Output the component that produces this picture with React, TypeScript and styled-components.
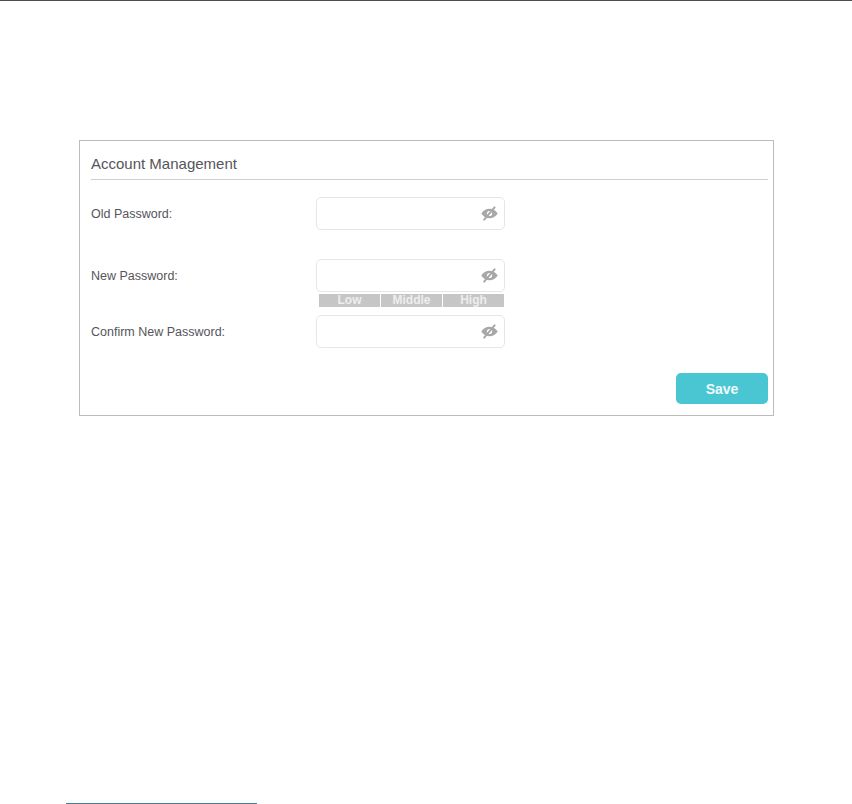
import styled, { createGlobalStyle } from 'styled-components'

const GlobalStyle = createGlobalStyle`
  html, body {
    margin: 0;
    padding: 0;
    background: #fff;
    font-family: "Liberation Sans", Arial, sans-serif;
  }
`

const EyeOffIcon = () => (
  <svg width="17" height="15" viewBox="0 0 17 15" aria-hidden="true">
    <path
      d="M0.3 7.5C2.2 4.5 5.1 2.8 8.5 2.8s6.3 1.7 8.2 4.7c-1.9 3-4.8 4.7-8.2 4.7s-6.3-1.7-8.2-4.7z"
      fill="#a8a8a8"
    />
    <circle cx="8.5" cy="7.5" r="2.6" fill="#fff" />
    <path d="M3.2 13.6L13.6 1.4" stroke="#a8a8a8" strokeWidth="2" strokeLinecap="round" />
  </svg>
)

const PasswordField = () => (
  <FieldBox>
    <EyeOffIcon />
  </FieldBox>
)

const App = () => {
  return (
    <Page>
      <GlobalStyle />
      <Card>
        <Title>Account Management</Title>
        <Row $top={17}>
          <Label>Old Password:</Label>
          <PasswordField />
        </Row>
        <Row $top={29}>
          <Label>New Password:</Label>
          <PasswordField />
        </Row>
        <Strength>
          <StrengthCell>Low</StrengthCell>
          <StrengthCell>Middle</StrengthCell>
          <StrengthCell>High</StrengthCell>
        </Strength>
        <Row $top={8}>
          <Label>Confirm New Password:</Label>
          <PasswordField />
        </Row>
        <Actions>
          <SaveButton>Save</SaveButton>
        </Actions>
      </Card>
      <FootnoteRule />
    </Page>
  )
}

const Page = styled.div`
  height: 804px;
  box-sizing: border-box;
  border-top: 1px solid #4d4d4d;
  padding: 139px 78px 0 79px;
  display: flex;
  flex-direction: column;
  overflow: hidden;
`

const Card = styled.section`
  box-sizing: border-box;
  width: 695px;
  height: 276px;
  border: 1px solid #bcbcbc;
  padding: 0 5px 0 11px;
`

const Title = styled.h2`
  margin: 0;
  height: 39px;
  box-sizing: border-box;
  padding-top: 14px;
  border-bottom: 1px solid #cfcfcf;
  font-size: 15px;
  line-height: 17px;
  font-weight: 400;
  color: #55555a;
`

const Row = styled.div<{ $top: number }>`
  height: 33px;
  margin-top: ${(p) => p.$top}px;
  display: flex;
  align-items: center;
`

const Label = styled.label`
  width: 225px;
  font-size: 12.5px;
  color: #55555a;
`

const FieldBox = styled.div`
  box-sizing: border-box;
  width: 189px;
  height: 33px;
  border: 1px solid #e6e6e6;
  border-radius: 5px;
  padding-right: 6px;
  display: flex;
  align-items: center;
  justify-content: flex-end;
`

const Strength = styled.div`
  margin: 2px 0 0 228px;
  width: 185px;
  height: 13px;
  display: grid;
  grid-template-columns: repeat(3, 1fr);
  gap: 1px;
`

const StrengthCell = styled.div`
  background: #c6c6c6;
  color: #eeeeee;
  font-size: 12px;
  font-weight: 700;
  line-height: 13px;
  text-align: center;
`

const Actions = styled.div`
  margin-top: 25px;
  display: flex;
  justify-content: flex-end;
`

const SaveButton = styled.button`
  width: 92px;
  height: 31px;
  border: 0;
  border-radius: 5px;
  background: #4ac6d2;
  color: #eefafb;
  font-family: inherit;
  font-size: 14px;
  font-weight: 700;
  padding: 0;
`

const FootnoteRule = styled.div`
  margin: auto 0 0 -13px;
  width: 191px;
  height: 1px;
  background: #3f8096;
`

export default App
